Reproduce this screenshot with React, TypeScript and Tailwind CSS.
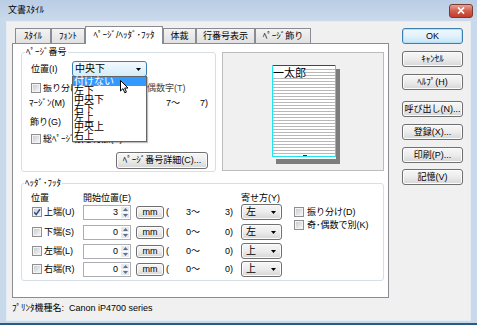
import React from "react";

const btnBase =
  "flex items-center justify-center rounded-[3px] border border-[#707070] bg-linear-to-b from-[#f7f7f7] via-[#ececec] to-[#d6d6d6] shadow-[inset_0_0_0_1px_#fcfcfc]";

function Cb({ checked = false }: { checked?: boolean }) {
  return (
    <span className="relative flex h-[10px] w-[10px] shrink-0 items-center justify-center border border-[#8f8f8f] bg-[#f3f3f3]">
      <span className="h-[6px] w-[6px] bg-linear-to-br from-[#c9cdd3] to-[#f4f4f4]" />
      {checked && (
        <svg className="absolute left-0 top-0" width="8" height="8" viewBox="0 0 8 8">
          <path d="M1.2 4.2 L3.2 6.5 L7 1.2" stroke="#34509a" strokeWidth="1.5" fill="none" />
        </svg>
      )}
    </span>
  );
}

function Arrow() {
  return (
    <svg width="5" height="3" viewBox="0 0 5 3">
      <path d="M0 0H5L2.5 3Z" fill="#000" />
    </svg>
  );
}

function Combo({ value, className = "" }: { value: string; className?: string }) {
  return (
    <div className={"flex items-center justify-between rounded-[3px] border border-[#707070] bg-linear-to-b from-[#f7f7f7] via-[#ececec] to-[#d6d6d6] shadow-[inset_0_0_0_1px_#fcfcfc] pl-[4px] pr-[5px] " + className}>
      <span className="text-[10px]">{value}</span>
      <Arrow />
    </div>
  );
}

function Spin({ value }: { value: string }) {
  return (
    <div className="flex h-[15px] w-[48px] items-stretch border border-[#abadb3] bg-white">
      <span className="flex flex-1 items-center justify-end pr-[3px]">{value}</span>
      <div className="flex w-[9px] flex-col gap-[1px] py-[1px] pr-[1px]">
        <div className="flex flex-1 items-center justify-center bg-[#e6e9ee]">
          <svg width="5" height="3" viewBox="0 0 5 3">
            <path d="M0 3H5L2.5 0Z" fill="#5c6f8c" />
          </svg>
        </div>
        <div className="flex flex-1 items-center justify-center bg-[#e6e9ee]">
          <svg width="5" height="3" viewBox="0 0 5 3">
            <path d="M0 0H5L2.5 3Z" fill="#5c6f8c" />
          </svg>
        </div>
      </div>
    </div>
  );
}

function HfRow({ label, checked, v, from, to, align, first }: { label: string; checked?: boolean; v: string; from: string; to: string; align: string; first?: string }) {
  return (
    <div className={"flex h-[16px] items-center pl-[10px] " + (first ?? "")}>
      <Cb checked={checked} />
      <span className="ml-[2px] w-[39px]">{label}</span>
      <Spin value={v} />
      <div className={btnBase + " ml-[5px] h-[13px] w-[28px]"}>mm</div>
      <span className="ml-[2px] w-[20px]">(</span>
      <span className="w-[27px]">{from}</span>
      <span className="w-[20px] text-right">{to}</span>
      <Combo value={align} className="ml-[8px] h-[16px] w-[41px]" />
    </div>
  );
}

function Preview() {
  const lines = Array.from({ length: 29 }, (_, i) => 4 + i * 3);
  return (
    <svg width="68" height="99" viewBox="0 0 68 99">
      <rect x="4" y="4" width="64" height="95" fill="#7d7d7d" />
      <rect x="0" y="0" width="64" height="94" fill="#ffffff" />
      {lines.map((y) => (
        <line key={y} x1="1" x2="63" y1={y + 0.5} y2={y + 0.5} stroke="#b8b8b8" strokeWidth="1" />
      ))}
      <rect x="1" y="1" width="32" height="12" fill="#ffffff" />
      <text x="1" y="11.5" fontSize="11" fontFamily="Noto Sans CJK JP, sans-serif" fill="#000">一太郎</text>
      <line x1="1" x2="63" y1="0.5" y2="0.5" stroke="#2d2dff" strokeWidth="1" />
      <line x1="0.5" x2="0.5" y1="0" y2="92" stroke="#1ee6ee" strokeWidth="1" />
      <line x1="63.5" x2="63.5" y1="0" y2="92" stroke="#1ee6ee" strokeWidth="1" />
      <line x1="0" x2="64" y1="91.5" y2="91.5" stroke="#1ee6ee" strokeWidth="1" />
      <rect x="31" y="90" width="4" height="1" fill="#333" />
    </svg>
  );
}

export default function App() {
  const tabs = [
    { t: "ｽﾀｲﾙ", w: "w-[36px]" },
    { t: "ﾌｫﾝﾄ", w: "w-[34px]" },
    { t: "ﾍﾟｰｼﾞ/ﾍｯﾀﾞ･ﾌｯﾀ", w: "w-[78px]", sel: true },
    { t: "体裁", w: "w-[33px]" },
    { t: "行番号表示", w: "w-[59px]" },
    { t: "ﾍﾟｰｼﾞ飾り", w: "w-[56px]" },
  ];
  const list = ["付けない", "左下", "中央下", "右下", "左上", "中央上", "右上"];
  return (
    <div className="flex h-[325px] w-[477px] flex-col overflow-hidden border-b-[2px] border-[#2a5d7d] bg-[#c9d9ec] font-['Liberation_Sans','Noto_Sans_CJK_JP',sans-serif] text-[9px] leading-none text-black">
      {/* title bar */}
      <div className="flex h-[21px] shrink-0 items-center bg-linear-to-b from-[#b9cde5] to-[#cbdaec] pl-[8px] pr-[4px]">
        <span className="text-[9px]">文書ｽﾀｲﾙ</span>
        <div className="ml-auto flex h-[14px] w-[24px] items-center justify-center rounded-[3px] border border-[#7a3a34] bg-linear-to-b from-[#e6a294] via-[#d25c4c] to-[#c13c2c]">
          <svg width="8" height="7" viewBox="0 0 8 7">
            <path d="M1 0.5 L7 6.5 M7 0.5 L1 6.5" stroke="#ffffff" strokeWidth="1.7" />
          </svg>
        </div>
      </div>
      {/* body */}
      <div className="flex flex-1 px-[6px] pb-[2px]">
        <div className="flex flex-1 border border-[#e4ecf5] bg-[#f0f0f0]">
          {/* left column */}
          <div className="ml-[5px] flex w-[377px] flex-col pt-[4px]">
            <div className="flex h-[17px] items-end pl-[3px]">
              {tabs.map((tb) =>
                tb.sel ? (
                  <div key={tb.t} className={"relative z-10 -mb-[1px] flex h-[18px] items-center justify-center border border-b-0 border-[#898c95] bg-white " + tb.w}>
                    {tb.t}
                  </div>
                ) : (
                  <div key={tb.t} className={"flex h-[15px] items-center justify-center border border-b-0 border-[#898c95] bg-linear-to-b from-[#f3f3f3] to-[#e1e1e1] " + tb.w}>
                    {tb.t}
                  </div>
                )
              )}
            </div>
            <div className="h-[255px] w-[377px] border border-[#898c95] bg-white pl-[8px] pt-[8px]">
              <div className="flex">
                {/* group page number */}
                <div className="relative flex h-[120px] w-[195px] flex-col rounded-[3px] border border-[#d5dfe5]">
                  <span className="absolute left-[3px] top-[-6px] bg-white px-[1px] leading-[11px]">ﾍﾟｰｼﾞ番号</span>
                  <div className="mt-[8px] flex h-[16px] items-center pl-[9px]">
                    <span className="w-[41px]">位置(I)</span>
                    <div className="flex h-[16px] w-[75px] items-center justify-between rounded-[3px] border border-[#3c7fb1] bg-linear-to-b from-[#f4fafe] to-[#d3ecfa] pl-[2px] pr-[5px]">
                      <span className="text-[10px]">中央下</span>
                      <Arrow />
                    </div>
                  </div>
                  <div className="mt-[5px] flex h-[12px] items-center pl-[9px]">
                    <Cb />
                    <span className="ml-[2px] w-[104px] overflow-hidden whitespace-nowrap">振り分けに</span>
                    <span className="text-[#444]">偶数字(T)</span>
                  </div>
                  <div className="mt-[3px] flex h-[12px] items-center pl-[7px]">
                    <span className="w-[137px]">ﾏｰｼﾞﾝ(M)</span>
                    <span className="w-[34px]">7～</span>
                    <span>7)</span>
                  </div>
                  <div className="mt-[7px] flex h-[12px] items-center pl-[8px]">
                    <span>飾り(G)</span>
                  </div>
                  <div className="mt-[5px] flex h-[12px] items-center pl-[9px]">
                    <Cb />
                    <span className="ml-[2px]">総ﾍﾟｰｼﾞ数を付加(A)</span>
                  </div>
                  <div className={btnBase + " ml-[94px] mt-[7px] h-[17px] w-[92px]"}>ﾍﾟｰｼﾞ番号詳細(C)...</div>
                  {/* open dropdown list */}
                  <div className="absolute left-[50px] top-[23px] z-20 h-[66px] w-[75px] border border-[#646464] bg-white shadow-[1px_1px_1px_rgba(0,0,0,0.25)]">
                    {list.map((it, i) => (
                      <div key={it} className={"h-[9px] pl-[1px] text-[10px] leading-[9px] " + (i === 0 ? "bg-[#3399ff] text-white" : "")}>
                        {it}
                      </div>
                    ))}
                    <svg className="absolute left-[47px] top-[3px]" width="9" height="14" viewBox="0 0 9 14">
                      <path d="M0.5 0.5 L0.5 11 L3 8.6 L4.8 12.8 L6.4 12.1 L4.7 8 L8 8 Z" fill="#ffffff" stroke="#000000" strokeWidth="1" strokeLinejoin="round" />
                    </svg>
                  </div>
                </div>
                {/* preview */}
                <div className="ml-[6px] h-[119px] w-[162px] border border-[#bcbcbc] bg-[#f0f0f0] pl-[49px] pt-[12px]">
                  <Preview />
                </div>
              </div>
              {/* group header/footer */}
              <div className="relative mt-[11px] flex h-[98px] w-[363px] flex-col rounded-[3px] border border-[#d5dfe5]">
                <span className="absolute left-[2px] top-[-6px] bg-white px-[1px] leading-[11px]">ﾍｯﾀﾞ･ﾌｯﾀ</span>
                <div className="mt-[8px] flex h-[12px] items-center pl-[9px]">
                  <span className="w-[52px]">位置</span>
                  <span className="w-[158px]">開始位置(E)</span>
                  <span>寄せ方(Y)</span>
                </div>
                <div className="flex">
                  <div className="flex flex-col">
                    <HfRow label="上端(U)" checked v="3" from="3～" to="3)" align="左" />
                    <HfRow label="下端(S)" v="0" from="0～" to="0)" align="左" first="mt-[4px]" />
                    <HfRow label="左端(L)" v="0" from="0～" to="0)" align="上" first="mt-[3px]" />
                    <HfRow label="右端(R)" v="0" from="0～" to="0)" align="上" first="mt-[2px]" />
                  </div>
                  <div className="ml-[12px] flex flex-col pt-[2px]">
                    <div className="flex h-[12px] items-center">
                      <Cb />
                      <span className="ml-[3px]">振り分け(D)</span>
                    </div>
                    <div className="mt-[1px] flex h-[12px] items-center">
                      <Cb />
                      <span className="ml-[3px]">奇･偶数で別(K)</span>
                    </div>
                  </div>
                </div>
              </div>
            </div>
            <div className="flex h-[20px] items-center">ﾌﾟﾘﾝﾀ機種名:&nbsp; Canon iP4700 series</div>
          </div>
          {/* right buttons */}
          <div className="ml-[13px] flex w-[61px] flex-col pt-[6px]">
            <div className="flex h-[16px] items-center justify-center rounded-[3px] border border-[#3c7fb1] bg-linear-to-b from-[#eef7fd] via-[#e2f2fc] to-[#c4e4f7] shadow-[inset_0_0_0_1px_#b6e0f7]">OK</div>
            <div className={btnBase + " mt-[7px] h-[16px]"}>ｷｬﾝｾﾙ</div>
            <div className={btnBase + " mt-[7px] h-[16px]"}>ﾍﾙﾌﾟ(H)</div>
            <div className={btnBase + " mt-[11px] h-[16px]"}>呼び出し(N)...</div>
            <div className={btnBase + " mt-[7px] h-[16px]"}>登録(X)...</div>
            <div className={btnBase + " mt-[7px] h-[16px]"}>印刷(P)...</div>
            <div className={btnBase + " mt-[6px] h-[16px]"}>記憶(V)</div>
          </div>
        </div>
      </div>
    </div>
  );
}
